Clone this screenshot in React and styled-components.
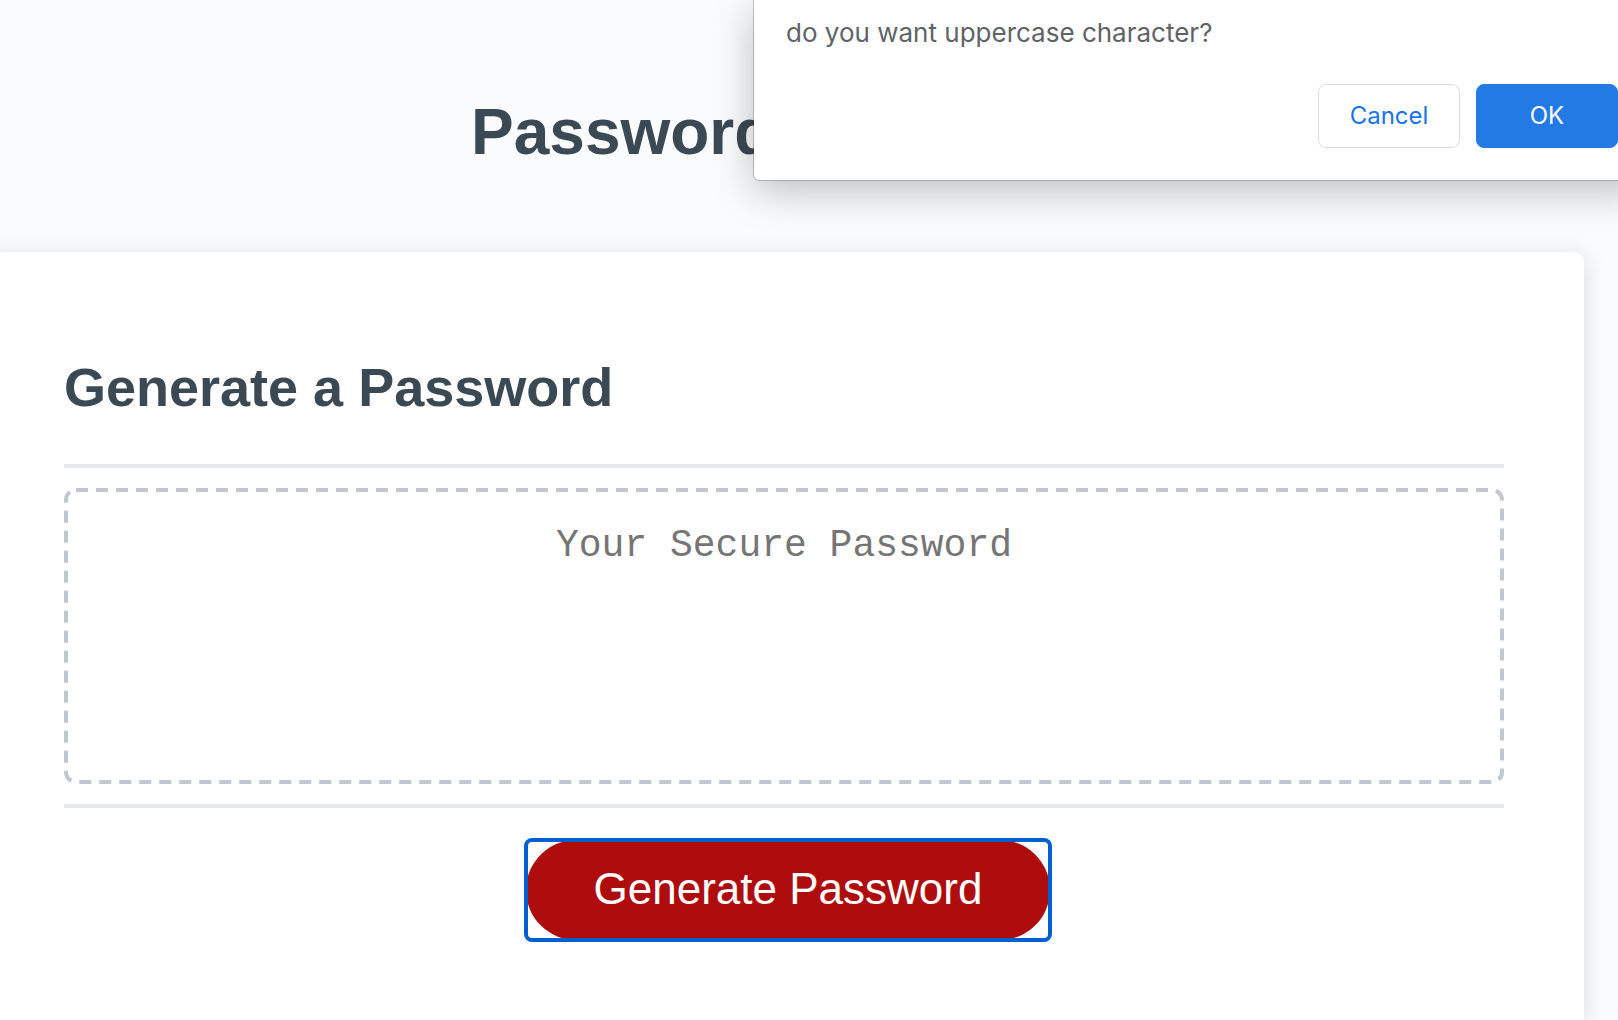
import React, { useState } from "react";
import styled, { createGlobalStyle } from "styled-components";

const GlobalStyle = createGlobalStyle`
  *, *::before, *::after { box-sizing: border-box; }
  body {
    margin: 0;
    background: #fafbfd;
    color: #3b4954;
    font-family: "Liberation Sans", Arial, sans-serif;
  }
`;

const Page = styled.div`
  position: relative;
  display: flex;
  flex-direction: column;
  min-height: 100vh;
  padding-right: 34px;
  overflow: hidden;
`;

const Header = styled.header`
  margin-left: -16px;
  padding: 96px 0 84px;
  text-align: center;
`;

const Title = styled.h1`
  margin: 0;
  font-size: 64px;
  line-height: 72px;
`;

const Card = styled.main`
  flex: 1;
  margin-left: -16px;
  padding: 104px 80px 0;
  background: #fff;
  border-radius: 10px 10px 0 0;
  box-shadow: 0 4px 24px rgba(0, 0, 0, 0.13);
`;

const CardTitle = styled.h2`
  margin: 0 0 46px;
  font-size: 54px;
  line-height: 62px;
`;

const CardBody = styled.div`
  padding: 20px 0;
  border: solid #e7e8ea;
  border-width: 4px 0;
`;

const PasswordField = styled.div`
  position: relative;
  display: flex;
`;

/* dashed outline with 12px dashes and 8px gaps, drawn over the field's edge */
const DashedOutline = styled.svg`
  position: absolute;
  inset: 0;
  width: 100%;
  height: 100%;
  pointer-events: none;

  rect {
    x: 2px;
    y: 2px;
    width: calc(100% - 4px);
    height: calc(100% - 4px);
    fill: none;
    stroke: #c0c7cf;
    stroke-width: 4px;
    stroke-dasharray: 12 8;
  }
`;

const PasswordBox = styled.textarea`
  flex: 1;
  height: 296px;
  padding: 36px;
  border: 0;
  border-radius: 12px;
  background: transparent;
  color: inherit;
  font-family: "Liberation Mono", "Courier New", monospace;
  font-size: 38px;
  line-height: 44px;
  text-align: center;
  resize: none;

  &::placeholder {
    color: #757575;
    opacity: 1;
  }
`;

const CardFooter = styled.div`
  display: flex;
  justify-content: center;
  padding: 32px 0 72px 8px;
`;

const GenerateButton = styled.button`
  position: relative;
  width: 524px;
  height: 100px;
  padding: 0 0 2px;
  border: 0;
  border-radius: 50px;
  background: #af0c0e;
  color: #fff;
  font-family: inherit;
  font-size: 44px;
  line-height: 50px;
  cursor: pointer;
  outline: none;

  /* rectangular focus ring straddling the pill's edge */
  &::after {
    content: "";
    position: absolute;
    inset: -2px;
    border: 4px solid #0060d0;
    border-radius: 8px;
  }
`;

const Dialog = styled.div`
  position: absolute;
  top: 0;
  right: -32px;
  width: 896px;
  padding: 16px 32px 32px;
  background: #fff;
  border-radius: 0 0 5px 5px;
  box-shadow: 0 0 0 1px rgba(0, 0, 0, 0.2), 0 10px 40px rgba(0, 0, 0, 0.25);
  font-family: Inter, Roboto, sans-serif;
`;

const DialogText = styled.p`
  margin: 0 0 34px;
  color: #5f6368;
  font-size: 26px;
  line-height: 34px;
`;

const DialogActions = styled.div`
  display: flex;
  justify-content: flex-end;
  gap: 16px;
`;

const DialogButton = styled.button`
  width: 142px;
  height: 64px;
  padding: 0;
  border: 1px solid ${(p) => (p.$primary ? "#247ae5" : "#dadce0")};
  border-radius: 8px;
  background: ${(p) => (p.$primary ? "#247ae5" : "#fff")};
  color: ${(p) => (p.$primary ? "#fff" : "#1a73e8")};
  font-family: inherit;
  font-size: 24px;
  line-height: 30px;
  cursor: pointer;
`;

export default function App() {
  const [open, setOpen] = useState(true);
  const close = () => setOpen(false);

  return (
    <>
      <GlobalStyle />
      <Page>
        <Header>
          <Title>Password Generator</Title>
        </Header>
        <Card>
          <CardTitle id="card-title">Generate a Password</CardTitle>
          <CardBody>
            <PasswordField>
              <PasswordBox
                readOnly
                placeholder="Your Secure Password"
                aria-labelledby="card-title"
              />
              <DashedOutline aria-hidden="true">
                <rect rx="10" />
              </DashedOutline>
            </PasswordField>
          </CardBody>
          <CardFooter>
            <GenerateButton type="button" onClick={() => setOpen(true)}>
              Generate Password
            </GenerateButton>
          </CardFooter>
        </Card>
        {open && (
          <Dialog role="dialog" aria-labelledby="dialog-text">
            <DialogText id="dialog-text">
              do you want uppercase character?
            </DialogText>
            <DialogActions>
              <DialogButton type="button" onClick={close}>
                Cancel
              </DialogButton>
              <DialogButton type="button" $primary onClick={close}>
                OK
              </DialogButton>
            </DialogActions>
          </Dialog>
        )}
      </Page>
    </>
  );
}
